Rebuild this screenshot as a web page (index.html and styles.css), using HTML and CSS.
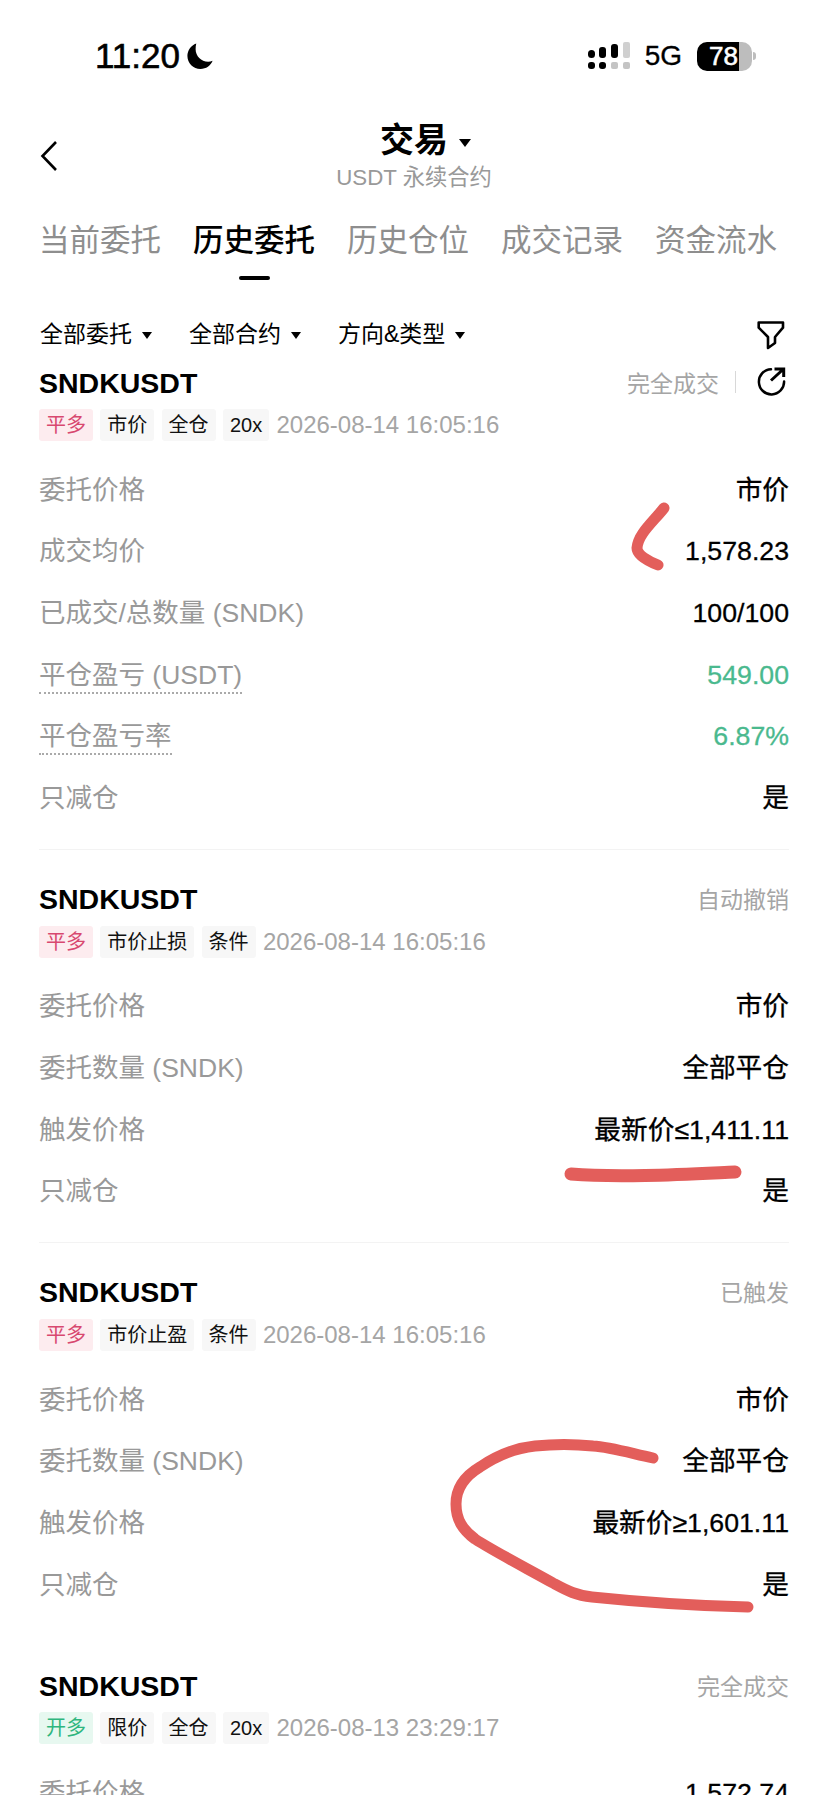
FILE: index.html
```html
<!DOCTYPE html>
<html lang="zh-CN">
<head>
  <meta charset="UTF-8" />
  <meta name="viewport" content="width=device-width, initial-scale=1.0" />
  <title>交易 - 历史委托</title>
  <link rel="stylesheet" href="styles.css">
</head>
<body>
  <div class="status-bar">
    <div class="status-left">
      <span class="time">11:20</span>
      <svg class="moon" viewBox="0 0 30 30"><path d="M11 1.500C5.500 3.500 1.500 8.800 1.500 15c0 7.700 6.300 14 14 14 6 0 11-3.600 13-8.800-1.500.6-3.100.9-4.800.9C16.300 21.100 10.300 15.100 10.300 7.700c0-2.200.2-4.200.7-6.200z" fill="#000"/></svg>
    </div>
    <div class="status-right">
      <svg class="signal" viewBox="0 0 42 28">
        <rect x="0" y="8" width="7" height="8" rx="3.500" fill="#000"/>
        <rect x="0" y="20" width="7" height="7" rx="3" fill="#000"/>
        <rect x="11" y="5" width="7" height="11" rx="3" fill="#000"/>
        <rect x="11" y="20" width="7" height="7" rx="3" fill="#000"/>
        <rect x="23" y="2" width="7" height="14" rx="3" fill="#000"/>
        <rect x="23" y="20" width="7" height="7" rx="2" fill="#c4c4c4"/>
        <rect x="35" y="0" width="7" height="16" rx="2" fill="#d0d0d0"/>
        <rect x="35" y="20" width="7" height="7" rx="2" fill="#c4c4c4"/>
      </svg>
      <span class="network">5G</span>
      <div class="battery"><span class="battery-level">78</span></div>
      <div class="battery-nub"></div>
    </div>
  </div>

  <header class="top-nav">
    <svg class="back" viewBox="0 0 18 32"><path d="M16 2L2.500 16 16 30" fill="none" stroke="#000" stroke-width="2.600"/></svg>
    <div class="top-title">
      <h1>交易<i class="caret caret-big"></i></h1>
      <p>USDT 永续合约</p>
    </div>
  </header>

  <nav class="tabs">
    <a>当前委托</a>
    <a class="active">历史委托</a>
    <a>历史仓位</a>
    <a>成交记录</a>
    <a>资金流水</a>
  </nav>

  <div class="filters">
    <span class="filter">全部委托<i class="caret"></i></span>
    <span class="filter">全部合约<i class="caret"></i></span>
    <span class="filter">方向&amp;类型<i class="caret"></i></span>
    <svg class="filter-icon" viewBox="0 0 28 29"><path d="M1.700 1.500H26V6.700L18 16V22L11 27V16L1.700 6.700z" fill="none" stroke="#000" stroke-width="2.600" stroke-linejoin="round"/></svg>
  </div>

  <main>
    <section class="card">
      <div class="card-head">
        <h2>SNDKUSDT</h2>
        <div class="card-status">
          <span>完全成交</span>
          <span class="sep"></span>
          <svg class="share" viewBox="0 0 29 29"><path d="M14 2.200A12.600 12.600 0 1 0 27.100 14.500" fill="none" stroke="#000" stroke-width="2.500" stroke-linecap="round"/><path d="M14 13.500L26.500 2M17.500 2h9.200v8" fill="none" stroke="#000" stroke-width="3"/></svg>
        </div>
      </div>
      <div class="meta">
        <span class="tag tag-red">平多</span>
        <span class="tag">市价</span>
        <span class="tag">全仓</span>
        <span class="tag">20x</span>
        <span class="stamp">2026-08-14 16:05:16</span>
      </div>
      <div class="rows">
        <div class="row"><span class="label">委托价格</span><span class="value">市价</span></div>
        <div class="row"><span class="label">成交均价</span><span class="value">1,578.23</span></div>
        <div class="row"><span class="label">已成交/总数量 (SNDK)</span><span class="value">100/100</span></div>
        <div class="row"><span class="label dotted">平仓盈亏 (USDT)</span><span class="value green">549.00</span></div>
        <div class="row"><span class="label dotted">平仓盈亏率</span><span class="value green">6.87%</span></div>
        <div class="row"><span class="label">只减仓</span><span class="value">是</span></div>
      </div>
    </section>

    <section class="card">
      <div class="card-head">
        <h2>SNDKUSDT</h2>
        <div class="card-status"><span>自动撤销</span></div>
      </div>
      <div class="meta">
        <span class="tag tag-red">平多</span>
        <span class="tag">市价止损</span>
        <span class="tag">条件</span>
        <span class="stamp">2026-08-14 16:05:16</span>
      </div>
      <div class="rows">
        <div class="row"><span class="label">委托价格</span><span class="value">市价</span></div>
        <div class="row"><span class="label">委托数量 (SNDK)</span><span class="value">全部平仓</span></div>
        <div class="row"><span class="label">触发价格</span><span class="value">最新价≤1,411.11</span></div>
        <div class="row"><span class="label">只减仓</span><span class="value">是</span></div>
      </div>
    </section>

    <section class="card no-line">
      <div class="card-head">
        <h2>SNDKUSDT</h2>
        <div class="card-status"><span>已触发</span></div>
      </div>
      <div class="meta">
        <span class="tag tag-red">平多</span>
        <span class="tag">市价止盈</span>
        <span class="tag">条件</span>
        <span class="stamp">2026-08-14 16:05:16</span>
      </div>
      <div class="rows">
        <div class="row"><span class="label">委托价格</span><span class="value">市价</span></div>
        <div class="row"><span class="label">委托数量 (SNDK)</span><span class="value">全部平仓</span></div>
        <div class="row"><span class="label">触发价格</span><span class="value">最新价≥1,601.11</span></div>
        <div class="row"><span class="label">只减仓</span><span class="value">是</span></div>
      </div>
    </section>

    <section class="card no-line">
      <div class="card-head">
        <h2>SNDKUSDT</h2>
        <div class="card-status"><span>完全成交</span></div>
      </div>
      <div class="meta">
        <span class="tag tag-green">开多</span>
        <span class="tag">限价</span>
        <span class="tag">全仓</span>
        <span class="tag">20x</span>
        <span class="stamp">2026-08-13 23:29:17</span>
      </div>
      <div class="rows">
        <div class="row"><span class="label">委托价格</span><span class="value">1,572.74</span></div>
      </div>
    </section>
  </main>

  <!-- red pen marks drawn over the screenshot -->
  <svg class="pen-marks" viewBox="0 0 828 1795">
    <path d="M664 508C653 522 638 534 637 548C637 555 648 561 658 565"/>
    <path d="M571 1174C620 1178 690 1174 735 1172" stroke-width="13"/>
    <path d="M653 1458C630 1453 610 1447 593 1446C575 1444 553 1444 535 1446C515 1448 495 1457 480 1467C465 1476 456 1488 456 1504C456 1520 463 1530 475 1539C495 1552 530 1570 553 1583C568 1591 575 1595 592 1597C640 1602 700 1606 748 1607"/>
  </svg>
</body>
</html>
```

FILE: styles.css
```css
html, body {
  margin: 0;
  padding: 0;
}
body {
  position: relative;
  width: 828px;
  height: 1795px;
  overflow: hidden;
  background-color: #fff;
  color: #000;
  font-family: "Liberation Sans", "Noto Sans CJK SC", sans-serif;
}
h1, h2, p {
  margin: 0;
}

.status-bar {
  height: 112px;
  display: flex;
  justify-content: space-between;
  align-items: center;
  padding: 0 72px 0 95px;
}
.status-left, .status-right {
  display: flex;
  align-items: center;
}
.time {
  font-size: 35px;
  -webkit-text-stroke: 0.6px #000;
}
.moon {
  width: 28px;
  height: 28px;
  margin-left: 6px;
}
.signal {
  width: 42px;
  height: 28px;
}
.network {
  font-size: 28px;
  margin-left: 15px;
  -webkit-text-stroke: 0.3px #000;
}
.battery {
  width: 55px;
  height: 29px;
  margin-left: 15px;
  border-radius: 10px;
  background: linear-gradient(to right, #000 76%, #bdbdbd 76%);
}
.battery-level {
  display: block;
  padding-left: 12px;
  color: #fff;
  font-size: 26px;
  line-height: 29px;
  -webkit-text-stroke: 0.6px #fff;
}
.battery-nub {
  width: 3px;
  height: 8px;
  margin-left: 1px;
  border-radius: 0 3px 3px 0;
  background-color: #bdbdbd;
}

.top-nav {
  display: grid;
  grid-template-columns: 128px 1fr 128px;
  align-items: center;
  margin-top: 6px;
  padding: 0 40px;
}
.back {
  width: 18px;
  height: 32px;
}
.top-title {
  text-align: center;
}
.top-title h1 {
  font-size: 34px;
  line-height: 44px;
  font-weight: 700;
  padding-left: 23px;
}
.top-title p {
  color: #999;
  font-size: 22.300px;
  line-height: 32px;
}
.caret {
  display: inline-block;
  margin-left: 10px;
  border-left: 5px solid transparent;
  border-right: 5px solid transparent;
  border-top: 7px solid #000;
  vertical-align: middle;
}
.caret-big {
  border-left-width: 6px;
  border-right-width: 6px;
  border-top-width: 8px;
  margin-left: 11px;
}

.tabs {
  display: flex;
  gap: 32px;
  margin-top: 26px;
  padding-left: 39px;
  height: 62px;
}
.tabs a {
  color: #8e8e8e;
  font-size: 30.500px;
  line-height: 40px;
  white-space: nowrap;
}
.tabs a.active {
  color: #000;
  font-weight: 500;
}
.tabs a.active::after {
  content: "";
  display: block;
  width: 31px;
  height: 4px;
  margin: 16px auto 0;
  border-radius: 2px;
  background-color: #000;
}

.filters {
  display: flex;
  align-items: center;
  height: 40px;
  margin-top: 32px;
  padding: 0 43px 0 40px;
}
.filter {
  font-size: 23px;
  line-height: 40px;
  margin-right: 37px;
  white-space: nowrap;
}
.filter .caret {
  margin-left: 10px;
}
.filter-icon {
  width: 28px;
  height: 29px;
  margin-left: auto;
  margin-top: 2px;
}

main {
  margin-top: 9px;
}
.card {
  margin: 0 39px;
  padding-bottom: 20px;
  margin-bottom: 30px;
  border-bottom: 1px solid #f3f3f3;
}
.no-line {
  border-bottom-color: transparent;
}
.card-head {
  display: flex;
  justify-content: space-between;
  align-items: center;
  height: 40px;
}
.card-head h2 {
  font-size: 28.500px;
  font-weight: 700;
}
.card-status {
  display: flex;
  align-items: center;
  padding-bottom: 3px;
  color: #a5a5a5;
  font-size: 23px;
}
.sep {
  width: 1px;
  height: 22px;
  margin: 0 21px 0 16px;
  background-color: #d8d8d8;
}
.share {
  width: 29px;
  height: 29px;
  margin-right: 3px;
}

.meta {
  display: flex;
  align-items: center;
  gap: 7.300px;
  height: 32px;
  margin-top: 6px;
}
.tag {
  height: 32px;
  padding: 0 7px;
  border-radius: 3px;
  background-color: #f7f7f7;
  color: #111;
  font-size: 20px;
  line-height: 32px;
  white-space: nowrap;
}
.tag-red {
  background-color: #fdecef;
  color: #d8486f;
}
.tag-green {
  background-color: #e7f8f0;
  color: #2fb67e;
}
.stamp {
  color: #a5a5a5;
  font-size: 24px;
}

.rows {
  margin-top: 18px;
}
.row {
  display: flex;
  justify-content: space-between;
  align-items: center;
  height: 61.600px;
}
.label {
  color: #999;
  font-size: 26.500px;
  line-height: 36px;
}
.dotted {
  border-bottom: 2px dotted #aaa;
  margin-bottom: -2px;
  line-height: 34px;
}
.value {
  color: #000;
  font-size: 26.700px;
  line-height: 36px;
  -webkit-text-stroke: 0.3px currentColor;
}
.green {
  color: #4ab98e;
}

.pen-marks {
  position: absolute;
  left: 0;
  top: 0;
  width: 828px;
  height: 1795px;
  fill: none;
  stroke: #e35e5b;
  stroke-width: 11;
  stroke-linecap: round;
  stroke-linejoin: round;
  pointer-events: none;
}
```
